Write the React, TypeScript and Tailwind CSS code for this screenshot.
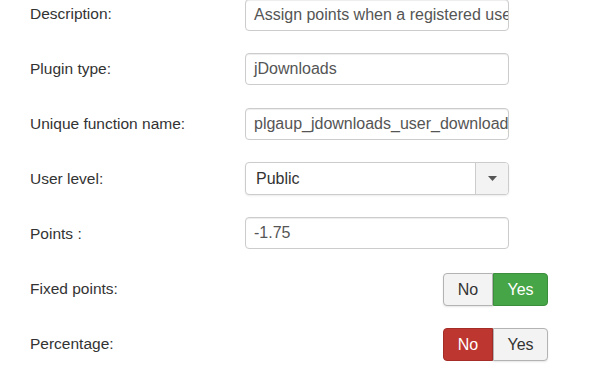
export default function App() {
  const font = { fontFamily: '"Liberation Sans", Arial, sans-serif' };
  const label = 'w-[215px] shrink-0 text-[15.5px] text-[#333]';
  const input =
    'w-[264px] h-[32px] border border-[#ccc] rounded-[4px] bg-white px-[8px] flex items-center text-[16px] text-[#555] overflow-hidden whitespace-nowrap shadow-[inset_0_1px_1px_rgba(0,0,0,0.075)]';

  return (
    <div className="w-[594px] h-[378px] overflow-hidden bg-white" style={font}>
      <div className="-mt-[1px] pl-[30px] flex flex-col">
        {/* Description */}
        <div className="h-[54px] flex items-start">
          <div className={`${label} pt-[3px]`}>Description:</div>
          <div className={input}>Assign points when a registered user downloads a file</div>
        </div>

        {/* Plugin type */}
        <div className="h-[55px] flex items-start">
          <div className={`${label} pt-[4px]`}>Plugin type:</div>
          <div className={input}>jDownloads</div>
        </div>

        {/* Unique function name */}
        <div className="h-[54px] flex items-start">
          <div className={`${label} pt-[4px]`}>Unique function name:</div>
          <div className={input}>plgaup_jdownloads_user_download_publish</div>
        </div>

        {/* User level */}
        <div className="h-[55px] flex items-start">
          <div className={`${label} pt-[5px]`}>User level:</div>
          <div className="w-[264px] h-[33px] border border-[#ccc] rounded-[4px] bg-white flex items-stretch text-[16px] text-[#333] overflow-hidden shadow-[0_1px_2px_rgba(0,0,0,0.08)]">
            <div className="flex-1 flex items-center px-[10px]">Public</div>
            <div className="w-[33px] border-l border-[#ccc] bg-[#f3f3f3] flex items-center justify-center">
              <svg width="9" height="5" viewBox="0 0 9 5">
                <path d="M0 0 H9 L4.5 5 Z" fill="#555" />
              </svg>
            </div>
          </div>
        </div>

        {/* Points */}
        <div className="h-[56px] flex items-start">
          <div className={`${label} pt-[5px]`}>Points :</div>
          <div className={input}>-1.75</div>
        </div>

        {/* Fixed points */}
        <div className="h-[55px] flex items-start">
          <div className={`${label} pt-[4px]`}>Fixed points:</div>
          <div className="ml-[198px] flex h-[33px] text-[16px]">
            <button className="w-[50px] h-full rounded-l-[4px] border border-[#b3b3b3] bg-[#f3f3f3] text-[#333] shadow-[0_1px_2px_rgba(0,0,0,0.1)]">
              No
            </button>
            <button className="w-[55px] h-full rounded-r-[4px] border border-[#3b8e3b] bg-[#46a546] text-white">
              Yes
            </button>
          </div>
        </div>

        {/* Percentage */}
        <div className="h-[55px] flex items-start">
          <div className={`${label} pt-[4px]`}>Percentage:</div>
          <div className="ml-[198px] flex h-[33px] text-[16px]">
            <button className="w-[50px] h-full rounded-l-[4px] border border-[#a52d27] bg-[#bd362f] text-white">
              No
            </button>
            <button className="w-[55px] h-full rounded-r-[4px] border border-[#b3b3b3] bg-[#f3f3f3] text-[#333] shadow-[0_1px_2px_rgba(0,0,0,0.1)]">
              Yes
            </button>
          </div>
        </div>
      </div>
    </div>
  );
}
